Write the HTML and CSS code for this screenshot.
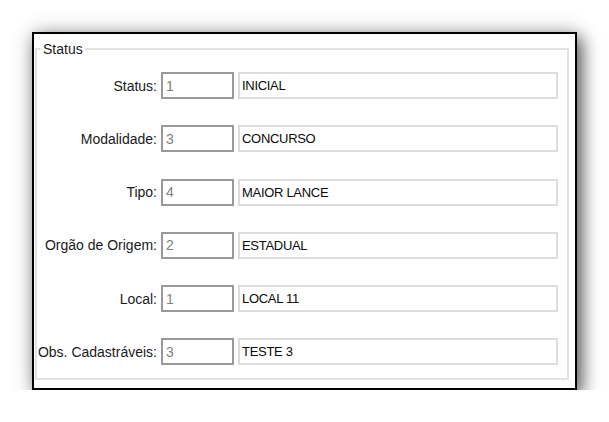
FILE: index.html
```html
<!DOCTYPE html>
<html lang="pt">
<head>
<meta charset="utf-8">
<title>Status</title>
<link rel="stylesheet" href="styles.css">
</head>
<body>
<div class="frame">
  <fieldset class="group">
    <legend class="group-title">Status</legend>
    <div class="form">
      <label class="lbl">Status:</label>
      <div class="code">1</div>
      <div class="desc">INICIAL</div>

      <label class="lbl">Modalidade:</label>
      <div class="code">3</div>
      <div class="desc">CONCURSO</div>

      <label class="lbl">Tipo:</label>
      <div class="code">4</div>
      <div class="desc">MAIOR LANCE</div>

      <label class="lbl">Orgão de Origem:</label>
      <div class="code">2</div>
      <div class="desc">ESTADUAL</div>

      <label class="lbl">Local:</label>
      <div class="code">1</div>
      <div class="desc">LOCAL 11</div>

      <label class="lbl">Obs. Cadastráveis:</label>
      <div class="code">3</div>
      <div class="desc">TESTE 3</div>
    </div>
  </fieldset>
</div>
</body>
</html>
```
FILE: styles.css
```css
html, body {
  margin: 0;
  padding: 0;
  background: #ffffff;
}

body {
  font-family: "Liberation Sans", Arial, sans-serif;
  font-size: 14px;
  color: #1a1a1a;
  padding: 32px 0 0 32px;
}

.frame {
  box-sizing: border-box;
  width: 545px;
  height: 358px;
  border: 2px solid #000000;
  background: #ffffff;
  padding: 7px 6px 8px 1px;
  display: flex;
  flex-direction: column;
  box-shadow: 5px 6px 16px rgba(0, 0, 0, 0.6), 0 0 20px rgba(0, 0, 0, 0.2);
}

.group {
  flex: 1;
  margin: 0;
  padding: 15px 0 0 0;
  border: 2px solid #e2e2e2;
  min-width: 0;
}

.group-title {
  margin-left: 4px;
  padding: 0 2px;
  line-height: 16px;
  font-size: 14px;
  color: #1a1a1a;
}

.form {
  display: grid;
  grid-template-columns: 120px 73px 320px;
  grid-auto-rows: 27px;
  column-gap: 4px;
  row-gap: 26.25px;
}

.lbl {
  display: flex;
  align-items: center;
  justify-content: flex-end;
  white-space: nowrap;
  color: #1a1a1a;
}

.code {
  box-sizing: border-box;
  border: 2px solid #999999;
  background: #ffffff;
  color: #7f7f7f;
  display: flex;
  align-items: center;
  padding-left: 3px;
}

.desc {
  box-sizing: border-box;
  border: 2px solid #dddddd;
  background: #ffffff;
  color: #0a0a0a;
  display: flex;
  align-items: center;
  padding-left: 2px;
  font-size: 13px;
  letter-spacing: -0.3px;
}
```
